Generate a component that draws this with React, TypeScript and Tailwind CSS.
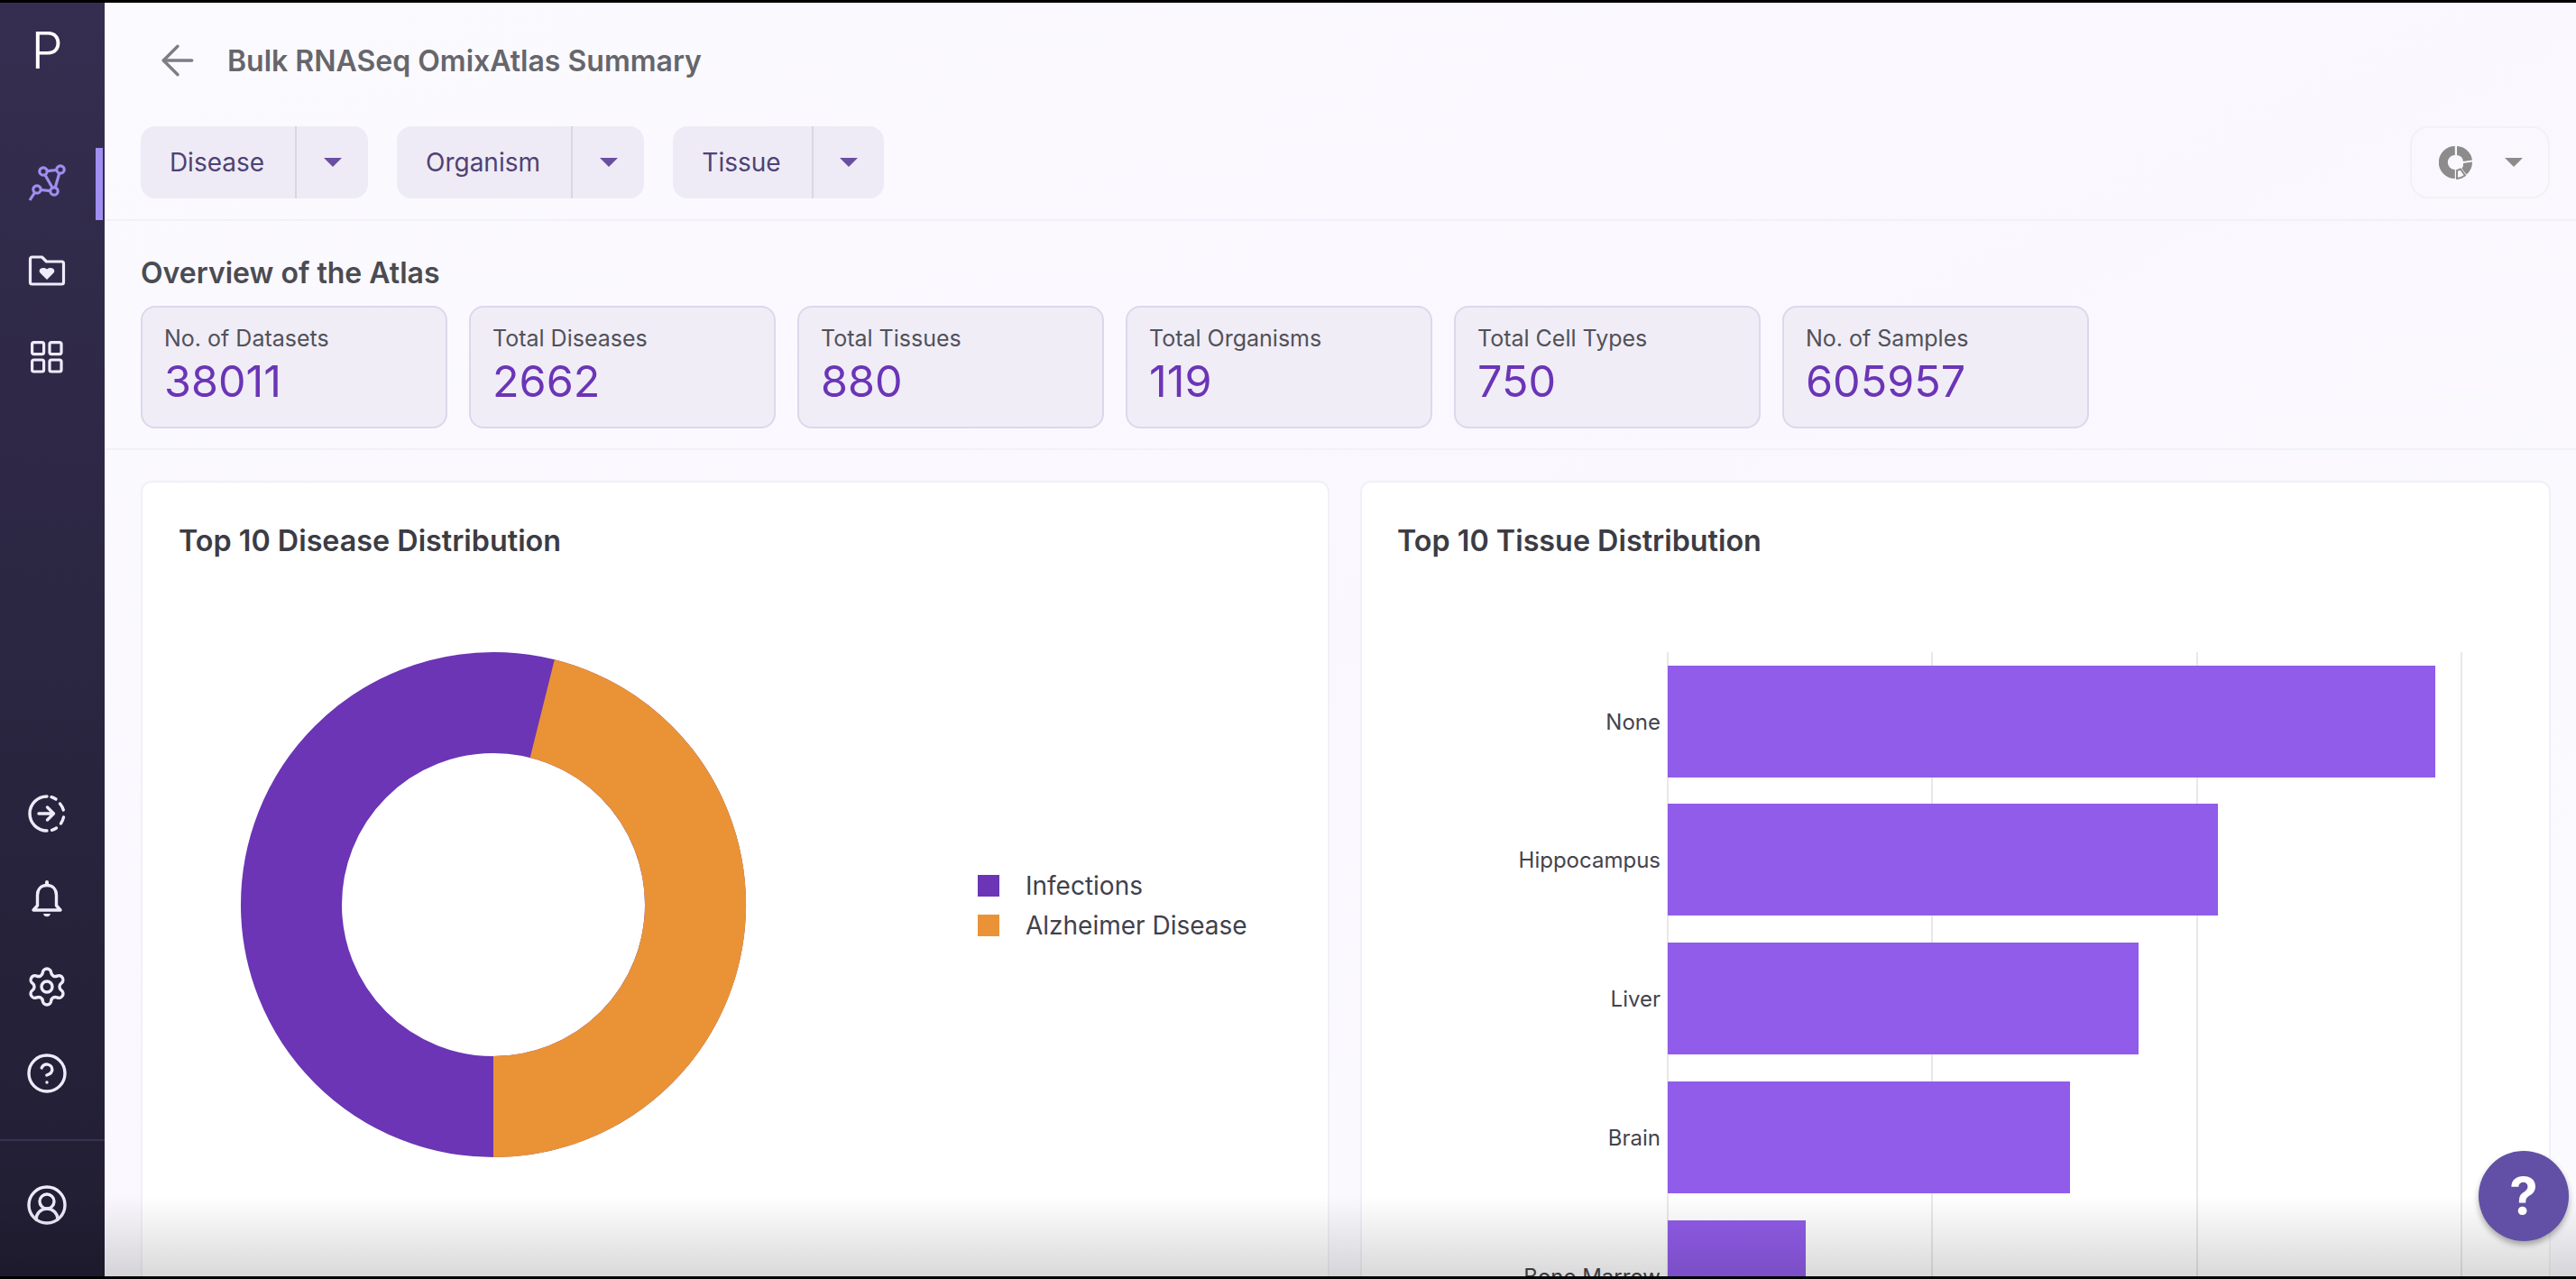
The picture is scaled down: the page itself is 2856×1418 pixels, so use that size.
import { ArrowLeft, CircleHelp, CircleUserRound, Settings } from "lucide-react";

const filters = [
  { label: "Disease", left: "w-[173px]", right: "w-[79px]" },
  { label: "Organism", left: "w-[195px]", right: "w-[79px]" },
  { label: "Tissue", left: "w-[156px]", right: "w-[78px]" },
];

const stats = [
  { title: "No. of Datasets", value: "38011" },
  { title: "Total Diseases", value: "2662" },
  { title: "Total Tissues", value: "880" },
  { title: "Total Organisms", value: "119" },
  { title: "Total Cell Types", value: "750" },
  { title: "No. of Samples", value: "605957" },
];

const bars = [
  { label: "None", y: 738, right: 2700 },
  { label: "Hippocampus", y: 891, right: 2459 },
  { label: "Liver", y: 1045, right: 2371 },
  { label: "Brain", y: 1199, right: 2295 },
  { label: "Bone Marrow", y: 1353, right: 2002 },
];

function NetworkIcon() {
  return (
    <svg width="46" height="46" viewBox="0 0 46 46" fill="none" stroke="#a08ef0" strokeWidth="3.2">
      <circle cx="19" cy="9" r="4.2" />
      <circle cx="38" cy="7" r="4.2" />
      <circle cx="31" cy="31" r="4.2" />
      <circle cx="12" cy="29" r="4.2" />
      <path d="M23.200 8.600 33.800 7.500M21 13l8 14M36.800 11 32.200 27M16.200 29.500l10.600 1.100M9.500 32.500 4 41" />
    </svg>
  );
}

function FolderHeartIcon() {
  return (
    <svg width="42" height="34" viewBox="0 0 42 34" fill="none">
      <path
        d="M2.500 4a2 2 0 0 1 2-2h11l5 5H37.500a2 2 0 0 1 2 2v21a2 2 0 0 1-2 2H4.500a2 2 0 0 1-2-2Z"
        stroke="#eeebfa"
        strokeWidth="3.200"
        strokeLinejoin="round"
      />
      <path d="M21 27 13.500 19.500c-3-3.500 2.500-8 7.500-4 5-4 10.500.5 7.500 4Z" fill="#eeebfa" />
    </svg>
  );
}

function GridIcon() {
  return (
    <svg width="36" height="36" viewBox="0 0 36 36" fill="none" stroke="#eeebfa" strokeWidth="3.200">
      <rect x="1.600" y="1.600" width="13" height="13" rx="2" />
      <rect x="21" y="1.600" width="13" height="13" rx="2" />
      <rect x="1.600" y="21" width="13" height="13" rx="2" />
      <rect x="21" y="21" width="13" height="13" rx="2" />
    </svg>
  );
}

function DashedArrowIcon() {
  return (
    <svg width="48" height="48" viewBox="-3 -3 48 48" fill="none" stroke="#eeebfa" strokeWidth="3.400" strokeLinecap="round" strokeLinejoin="round">
      <path d="M21 2C10.500 2 2 10.500 2 21S10.500 40 21 40" />
      <path d="M26 2.700a19 19 0 0 1 5 2.300M35.500 10a19 19 0 0 1 3.800 7M39.500 25a19 19 0 0 1-3 7M31.500 37a19 19 0 0 1-5 2.300" />
      <path d="M12 21h16M21.500 14l7 7-7 7" />
    </svg>
  );
}

function BellIcon() {
  return (
    <svg width="48" height="48" viewBox="0 0 48 48" fill="none" stroke="#eeebfa" strokeWidth="3.400" strokeLinejoin="round">
      <path d="M24 7.500c-6.500 0-10.500 4.500-10.500 11V30l-4.500 5h30l-4.500-5V18.500C34.500 12 30.500 7.500 24 7.500Z" />
      <path d="M24 4v3" strokeLinecap="round" strokeWidth="4" />
      <path d="M20.500 39.500h7C27 42.500 21 42.500 20.500 39.500Z" fill="#eeebfa" strokeWidth="1" />
    </svg>
  );
}

function MiniDonut() {
  return (
    <svg width="38" height="38" viewBox="0 0 38 38" fill="none">
      <path d="M17.800 1A18 18 0 0 0 17.800 37V27A8 8 0 0 1 17.800 11Z" fill="#8c8c8c" />
      <path d="M20 1A18 18 0 0 1 37 16.500L27 18A8 8 0 0 0 20 11Z" fill="#8c8c8c" />
      <path d="M37 18.500A18 18 0 0 1 30.500 32.500L25.500 26A8 8 0 0 0 27 20Z" fill="#8c8c8c" />
      <path d="M29 33.500A18 18 0 0 1 20 37V28L24 26.500Z" stroke="#8c8c8c" strokeWidth="2" />
    </svg>
  );
}

function Caret({ className }: { className: string }) {
  return <span className={`h-0 w-0 border-x-[10px] border-t-[10px] border-x-transparent ${className}`} />;
}

function Sidebar() {
  return (
    <aside className="flex h-full w-[116px] shrink-0 flex-col bg-gradient-to-b from-[#352e50] to-[#211e33]">
      <div className="flex h-[102px] items-center justify-center pr-[12px] pt-1 text-[56px] font-light leading-none text-white">
        P
      </div>
      <div className="relative mt-[59px] flex h-[80px] items-center justify-center pr-[12px]">
        <NetworkIcon />
        <span className="absolute right-[2px] top-0 h-[80px] w-[8px] bg-[#a08ef0]" />
      </div>
      <div className="mt-[16px] flex h-[80px] items-center justify-center pr-[12px]">
        <FolderHeartIcon />
      </div>
      <div className="mt-[16px] flex h-[80px] items-center justify-center pr-[12px]">
        <GridIcon />
      </div>
      <div className="mt-auto flex flex-col items-center gap-[48px] pb-[49px] pr-[12px] text-[#eeebfa]">
        <DashedArrowIcon />
        <BellIcon />
        <Settings size={48} strokeWidth={1.7} />
        <CircleHelp size={48} strokeWidth={1.7} />
      </div>
      <div className="flex h-[152px] items-center justify-center border-t-2 border-[#37324f] pb-[8px] pr-[12px] text-[#eeebfa]">
        <CircleUserRound size={48} strokeWidth={1.7} />
      </div>
    </aside>
  );
}

function DonutCard() {
  return (
    <section className="flex w-[1318px] shrink-0 flex-col rounded-t-[12px] border-2 border-b-0 border-[#f1f0f8] bg-white pl-[40px] pt-[45px]">
      <h2 className="text-[32.3px] font-semibold leading-[40px] text-[#3c3c44]">Top 10 Disease Distribution</h2>
      <div className="mt-[97px] flex items-start">
        <svg width="600" height="600" viewBox="0 0 600 600" className="ml-[49px] mt-[-14px] shrink-0">
          <circle cx="300" cy="300" r="224" fill="none" stroke="#6b35b6" strokeWidth="112" />
          <path d="M367.800 28.300A280 280 0 0 1 300 580V468A168 168 0 0 0 340.700 137Z" fill="#e99336" />
        </svg>
        <div className="ml-[237px] mt-[247px] flex flex-col gap-[8px]">
          {[
            { name: "Infections", color: "bg-[#6b35b6]" },
            { name: "Alzheimer Disease", color: "bg-[#e99336]" },
          ].map((item) => (
            <div key={item.name} className="flex h-[36px] items-center gap-[29px]">
              <span className={`h-[24px] w-[24px] ${item.color}`} />
              <span className="whitespace-nowrap text-[28px] leading-none text-[#41414b]">{item.name}</span>
            </div>
          ))}
        </div>
      </div>
    </section>
  );
}

function BarCard() {
  return (
    <section className="flex w-[1320px] shrink-0 flex-col rounded-t-[12px] border-2 border-b-0 border-[#f1f0f8] bg-white pl-[39px] pt-[45px]">
      <h2 className="text-[32.3px] font-semibold leading-[40px] text-[#3c3c44]">Top 10 Tissue Distribution</h2>
      <svg width="1277" height="800" viewBox="1549 630 1277 800" className="mt-[10px] shrink-0">
        {[1849, 2142, 2436, 2729].map((x) => (
          <line key={x} x1={x} x2={x} y1="723" y2="1430" stroke="#e8e8ec" strokeWidth="2" />
        ))}
        {bars.map((bar) => (
          <g key={bar.label}>
            <rect x="1849" y={bar.y} width={bar.right - 1849} height="124" fill="#905ce9" />
            <text x="1841" y={bar.y + 71} textAnchor="end" fontSize="24" fill="#44444c" fontFamily="Inter, sans-serif">
              {bar.label}
            </text>
          </g>
        ))}
      </svg>
    </section>
  );
}

export default function App() {
  return (
    <div className="relative h-[1418px] w-[2856px] overflow-hidden bg-black pb-[3px] pt-[3px] font-['Inter',sans-serif]">
      <div className="flex h-full w-full">
        <Sidebar />
        <main className="flex min-w-0 flex-1 flex-col bg-gradient-to-br from-[#fbfaff] via-[#faf8fe] to-[#fbfbff]">
          <header className="h-[242px] shrink-0 border-b-2 border-[#f2f0f8]">
            <div className="flex h-[137px] items-start pl-[54px] pt-[37px]">
              <ArrowLeft size={54} strokeWidth={1.5} className="text-[#7d7d85]" />
              <h1 className="ml-[28px] mt-[6px] text-[32px] font-semibold leading-[44px] text-[#66666c]">
                Bulk RNASeq OmixAtlas Summary
              </h1>
            </div>
            <div className="flex items-start justify-between pl-[40px] pr-[29px]">
              <div className="flex gap-[32px]">
                {filters.map((filter) => (
                  <div key={filter.label} className="flex h-[80px] rounded-[16px] bg-[#efebf6]">
                    <div
                      className={`flex items-center justify-center border-r-2 border-[#d9d5e2] pr-[2px] text-[28px] text-[#4f4274] ${filter.left}`}
                    >
                      {filter.label}
                    </div>
                    <div className={`flex items-center justify-center ${filter.right}`}>
                      <Caret className="border-t-[#6a4ea0]" />
                    </div>
                  </div>
                ))}
              </div>
              <div className="flex h-[80px] w-[155px] items-center gap-[35px] rounded-[20px] border-2 border-[#f2f1f5] pl-[30px]">
                <MiniDonut />
                <Caret className="border-t-[#8c8c8c]" />
              </div>
            </div>
          </header>

          <div className="h-[254px] shrink-0 border-b-2 border-[#f2f0f8] px-[40px] pt-[36px]">
            <h2 className="text-[32px] font-semibold leading-[44px] text-[#4b4b52]">Overview of the Atlas</h2>
            <div className="mt-[14px] flex gap-[24px]">
              {stats.map((stat) => (
                <div
                  key={stat.title}
                  className="h-[136px] w-[340px] rounded-[16px] border-2 border-[#dcd8ec] bg-[#f0edf7] px-[24px] pt-[18px]"
                >
                  <p className="text-[25px] leading-[32px] text-[#515158]">{stat.title}</p>
                  <p className="mt-[4px] text-[48.5px] leading-[56px] text-[#6b35b6]">{stat.value}</p>
                </div>
              ))}
            </div>
          </div>

          <div className="flex min-h-0 flex-1 gap-[34px] overflow-hidden px-[40px] pt-[34px]">
            <DonutCard />
            <BarCard />
          </div>
        </main>
      </div>

      {/* bottom fade + help button sit over the page */}
      <div className="pointer-events-none absolute inset-x-0 bottom-[3px] h-[90px] bg-gradient-to-b from-transparent to-[#00000026]" />
      <button className="absolute bottom-[42px] right-[8px] flex h-[100px] w-[100px] items-center justify-center rounded-full bg-[#6150a5] text-[56px] font-bold leading-none text-white shadow-[0_4px_6px_rgba(0,0,0,0.3)]">
        ?
      </button>
    </div>
  );
}
